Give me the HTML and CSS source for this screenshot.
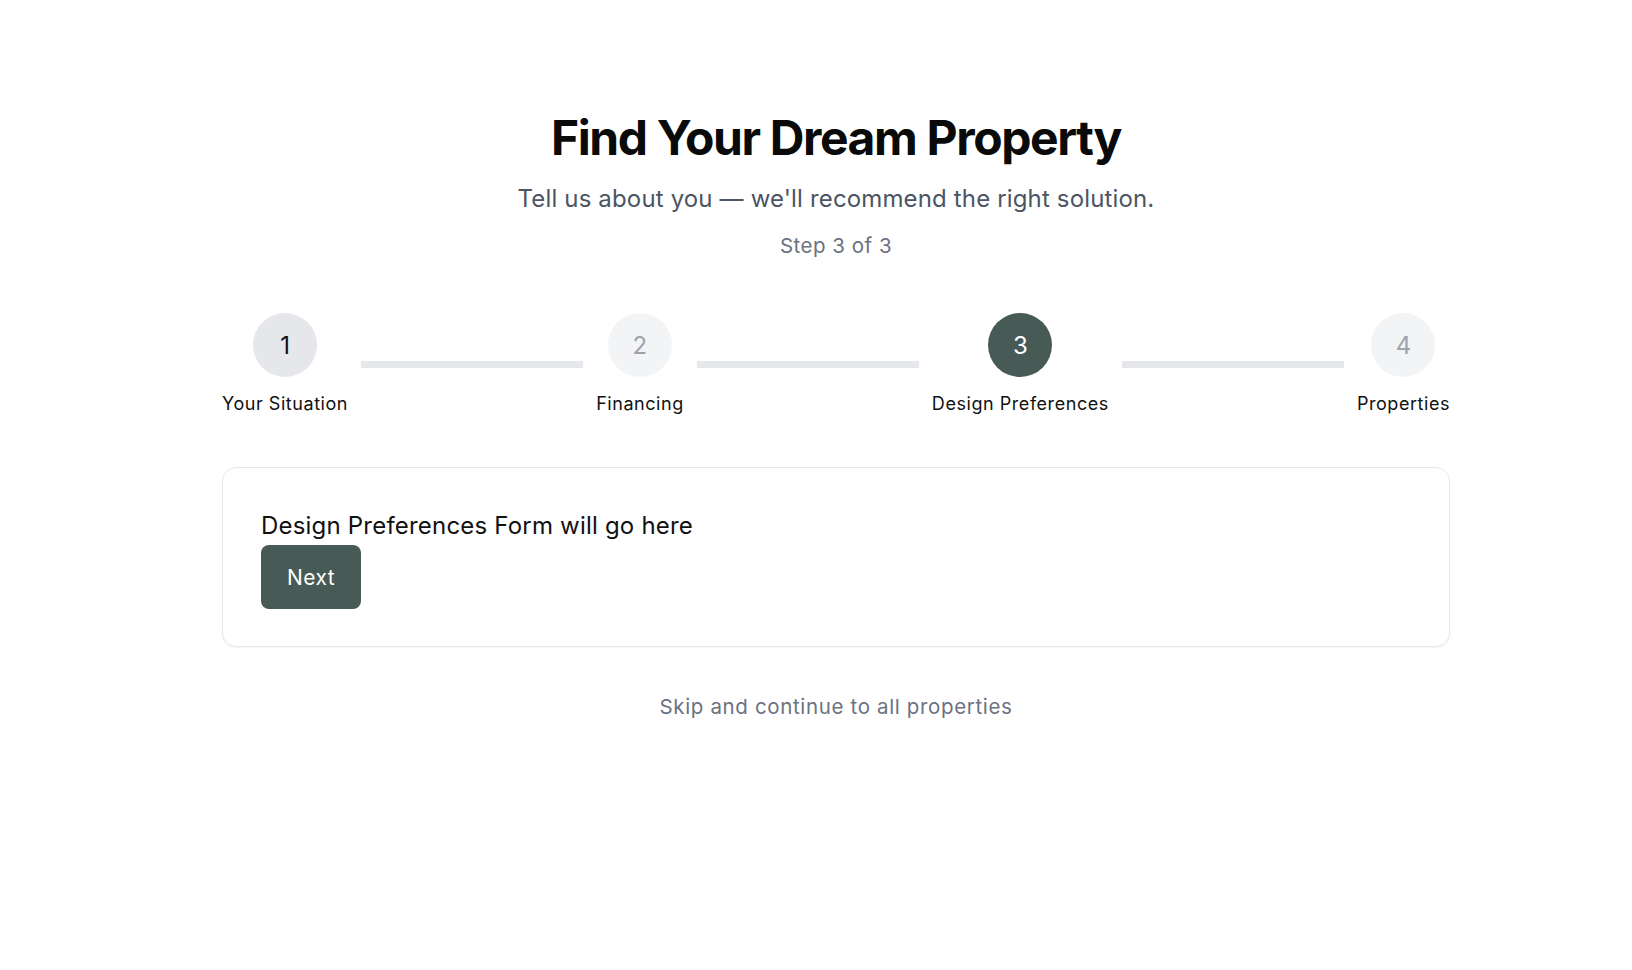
FILE: index.html
```html
<!DOCTYPE html>
<html lang="en">
<head>
<meta charset="utf-8">
<title>Find Your Dream Property</title>
<link rel="stylesheet" href="styles.css">
</head>
<body>
<div class="page">
  <main class="wizard">
    <h1 class="title">Find Your Dream Property</h1>
    <p class="subtitle">Tell us about you — we'll recommend the right solution.</p>
    <p class="step-count">Step 3 of 3</p>

    <div class="stepper">
      <div class="step">
        <div class="circle done">1</div>
        <div class="label">Your Situation</div>
      </div>
      <div class="line"></div>
      <div class="step">
        <div class="circle todo">2</div>
        <div class="label">Financing</div>
      </div>
      <div class="line"></div>
      <div class="step">
        <div class="circle active">3</div>
        <div class="label">Design Preferences</div>
      </div>
      <div class="line"></div>
      <div class="step">
        <div class="circle todo">4</div>
        <div class="label">Properties</div>
      </div>
    </div>

    <section class="card">
      <p class="card-text">Design Preferences Form will go here</p>
      <button class="btn" type="button">Next</button>
    </section>

    <a class="skip" href="#">Skip and continue to all properties</a>
  </main>
</div>
</body>
</html>
```
FILE: styles.css
```css
* { box-sizing: border-box; }
html, body { margin: 0; padding: 0; background: #ffffff; }
body {
  font-family: Inter, "Noto Sans", "Liberation Sans", sans-serif;
  color: #111111;
}
.page {
  display: flex;
  justify-content: center;
  padding: 109px 0 0 40px;
}
.wizard {
  width: 1228px;
  display: flex;
  flex-direction: column;
  align-items: center;
}
.title {
  margin: 0;
  font-size: 48px;
  line-height: 58px;
  font-weight: 700;
  color: #0a0a0a;
  letter-spacing: -1.4px;
}
.subtitle {
  margin: 16px 0 0;
  font-size: 24px;
  line-height: 32px;
  color: #4b5563;
  letter-spacing: 0.15px;
}
.step-count {
  margin: 17px 0 0;
  font-size: 20.5px;
  line-height: 28px;
  color: #6b7280;
  letter-spacing: 0.5px;
}
.stepper {
  align-self: stretch;
  display: flex;
  align-items: center;
  margin-top: 53px;
}
.step {
  display: flex;
  flex-direction: column;
  align-items: center;
}
.circle {
  width: 64px;
  height: 64px;
  border-radius: 50%;
  display: flex;
  align-items: center;
  justify-content: center;
  font-size: 24px;
}
.circle.done { background: #e5e7eb; color: #111111; }
.circle.todo { background: #f3f4f6; color: #9ca3af; }
.circle.active { background: #475a56; color: #ffffff; }
.label {
  margin-top: 15px;
  font-size: 18px;
  line-height: 24px;
  color: #111111;
  white-space: nowrap;
  letter-spacing: 0.55px;
}
.line {
  flex: 1;
  height: 7px;
  background: #e5e7eb;
  margin: 0 13px;
}
.card {
  align-self: stretch;
  margin-top: 51px;
  border: 1px solid #e5e7eb;
  border-radius: 14px;
  box-shadow: 0 1px 2px rgba(0,0,0,0.05);
  padding: 40px 38px 37px;
  display: flex;
  flex-direction: column;
  align-items: flex-start;
}
.card-text {
  margin: 0;
  font-size: 24px;
  line-height: 36px;
  color: #111111;
  letter-spacing: 0.2px;
}
.btn {
  margin-top: 1px;
  width: 100px;
  height: 64px;
  border: none;
  border-radius: 8px;
  background: #475a56;
  color: #ffffff;
  font-family: inherit;
  font-size: 21px;
  letter-spacing: 0.4px;
  cursor: pointer;
}
.skip {
  margin-top: 46px;
  font-size: 20.5px;
  line-height: 28px;
  color: #6b7280;
  text-decoration: none;
  letter-spacing: 0.65px;
}
```
